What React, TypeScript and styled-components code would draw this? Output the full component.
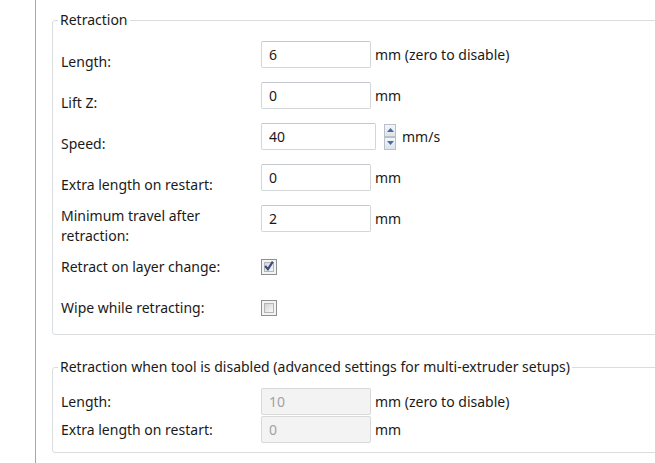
import React from 'react';
import styled, { createGlobalStyle } from 'styled-components';

const GlobalStyle = createGlobalStyle`
  html, body {
    margin: 0;
    padding: 0;
    background: #ffffff;
    overflow: hidden;
  }
  body {
    font-family: 'Noto Sans', 'Open Sans', 'Liberation Sans', sans-serif;
    font-size: 14px;
    color: #1a1a1a;
  }
`;

const Page = styled.div`
  display: flex;
  min-height: 100vh;
  width: 100vw;
  overflow: hidden;
`;

const Gutter = styled.div`
  width: 35px;
  flex: none;
  border-right: 1px solid #a7a7a7;
`;

const Content = styled.div`
  flex: 1;
  min-width: 0;
  padding: 12px 0 0 16px;
  margin-right: -4px;
  display: flex;
  flex-direction: column;
  gap: 24px;
`;

const Group = styled.fieldset<{ $bottom: number }>`
  margin: 0;
  padding: 13px 8px ${({ $bottom }) => $bottom}px 8px;
  border: 1px solid #dadde0;
  border-radius: 3px;
  min-width: 0;
`;

const Legend = styled.legend`
  margin-left: -3px;
  padding: 0 2px;
  line-height: 16px;
  color: #1a1a1a;
`;

const Row = styled.div<{ $height: number }>`
  display: flex;
  height: ${({ $height }) => $height}px;
`;

const Label = styled.div`
  width: 200px;
  flex: none;
  padding-right: 25px;
  box-sizing: border-box;
  display: flex;
  align-items: center;
  line-height: 20px;
`;

const Field = styled.div<{ $center?: boolean }>`
  display: flex;
  align-items: center;
  height: ${({ $center }) => ($center ? 'auto' : '27px')};
  align-self: ${({ $center }) => ($center ? 'center' : 'flex-start')};
`;

const Input = styled.input<{ $width?: number }>`
  box-sizing: border-box;
  width: ${({ $width }) => $width ?? 110}px;
  height: 27px;
  padding: 0 7px;
  margin: 0;
  font: inherit;
  color: #1a1a1a;
  background: #ffffff;
  border: 1px solid #d3d6d9;
  border-top-color: #c4c7cb;
  border-radius: 2px;
  outline: none;

  &:disabled {
    background: #f3f3f3;
    color: #a2a2a2;
    border-color: #d9d9d9;
  }
`;

const Unit = styled.span<{ $gap?: number }>`
  margin-left: ${({ $gap }) => $gap ?? 4}px;
  white-space: nowrap;
`;

const Spin = styled.div`
  display: flex;
  flex-direction: column;
  margin-left: 8px;
  width: 12px;
`;

const SpinButton = styled.div`
  height: 13px;
  box-sizing: border-box;
  border: 1px solid #b9c0c9;
  background: linear-gradient(#f4f6f8, #dde3ea);
  display: flex;
  align-items: center;
  justify-content: center;
`;

const Check = styled.div<{ $checked?: boolean }>`
  width: 16px;
  height: 16px;
  box-sizing: border-box;
  border: 1px solid #8f8f8f;
  padding: 2px;
  background: #f4f4f4;
  display: flex;

  & > span {
    flex: 1;
    border: 1px solid #b5b5b5;
    background: ${({ $checked }) =>
      $checked ? 'linear-gradient(135deg, #cfd6e4, #f4f6fa)' : 'linear-gradient(135deg, #d3d3d3, #fafafa)'};
    position: relative;
  }
`;

const Tick = styled.svg`
  position: absolute;
  left: -2px;
  top: -3px;
`;

const Arrow = ({ up }: { up?: boolean }) => (
  <svg width="7" height="4" viewBox="0 0 7 4">
    <path d={up ? 'M0 4 L3.5 0 L7 4 Z' : 'M0 0 L3.5 4 L7 0 Z'} fill="#4d6aa0" />
  </svg>
);

type InputRow = { label: string; value: string; unit: string; width?: number; spin?: boolean };

const mainRows: InputRow[] = [
  { label: 'Length:', value: '6', unit: 'mm (zero to disable)' },
  { label: 'Lift Z:', value: '0', unit: 'mm' },
  { label: 'Speed:', value: '40', unit: 'mm/s', width: 115, spin: true },
  { label: 'Extra length on restart:', value: '0', unit: 'mm' },
  { label: 'Minimum travel after retraction:', value: '2', unit: 'mm' },
];

const toggles = [
  { label: 'Retract on layer change:', checked: true },
  { label: 'Wipe while retracting:', checked: false },
];

const disabledRows: InputRow[] = [
  { label: 'Length:', value: '10', unit: 'mm (zero to disable)' },
  { label: 'Extra length on restart:', value: '0', unit: 'mm' },
];

export default function App() {
  return (
    <>
      <GlobalStyle />
      <Page>
        <Gutter />
        <Content>
          <Group $bottom={6}>
            <Legend>Retraction</Legend>
            {mainRows.map((r) => (
              <Row key={r.label} $height={41}>
                <Label>{r.label}</Label>
                <Field>
                  <Input readOnly value={r.value} $width={r.width} />
                  {r.spin && (
                    <Spin>
                      <SpinButton>
                        <Arrow up />
                      </SpinButton>
                      <SpinButton>
                        <Arrow />
                      </SpinButton>
                    </Spin>
                  )}
                  <Unit $gap={r.spin ? 6 : 4}>{r.unit}</Unit>
                </Field>
              </Row>
            ))}
            {toggles.map((t) => (
              <Row key={t.label} $height={41}>
                <Label>{t.label}</Label>
                <Field $center>
                  <Check $checked={t.checked}>
                    <span>
                      {t.checked && (
                        <Tick width="12" height="12" viewBox="0 0 11 11">
                          <path d="M2 5.5 L4.5 8.5 L9 1.5" fill="none" stroke="#3b4a78" strokeWidth="2" />
                        </Tick>
                      )}
                    </span>
                  </Check>
                </Field>
              </Row>
            ))}
          </Group>
          <Group $bottom={8}>
            <Legend>Retraction when tool is disabled (advanced settings for multi-extruder setups)</Legend>
            {disabledRows.map((r) => (
              <Row key={r.label} $height={28}>
                <Label>{r.label}</Label>
                <Field>
                  <Input disabled value={r.value} />
                  <Unit>{r.unit}</Unit>
                </Field>
              </Row>
            ))}
          </Group>
        </Content>
      </Page>
    </>
  );
}
